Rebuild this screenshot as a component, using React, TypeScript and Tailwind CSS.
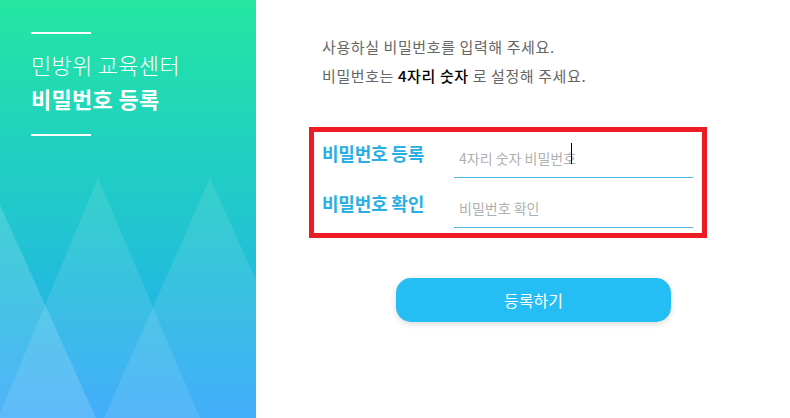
import React from 'react';

const font = { fontFamily: '"Noto Sans CJK KR", "Noto Sans", sans-serif' };

function Mountains() {
  return (
    <svg
      className="absolute inset-0 h-full w-full"
      viewBox="0 0 256 418"
      preserveAspectRatio="none"
    >
      <polygon points="-12,178 -112,418 96,418" fill="#ffffff" fillOpacity="0.16" />
      <polygon points="98,178 -2,418 200,418" fill="#ffffff" fillOpacity="0.1" />
      <polygon points="210,178 104,418 318,418" fill="#ffffff" fillOpacity="0.1" />
    </svg>
  );
}

function Field({ label, placeholder, cursor }: { label: string; placeholder: string; cursor?: boolean }) {
  return (
    <div className="flex items-center">
      <label className="mb-[10px] w-[132px] text-[18px] font-bold tracking-[-0.2px] text-[#2aaee6]">{label}</label>
      <div className="relative w-[239px]">
        <input
          type="password"
          placeholder={placeholder}
          className="h-[40px] w-full border-b border-[#4db6e2] bg-transparent pl-[5px] text-[14px] text-[#333] placeholder:text-[#b0b0b0] outline-none"
        />
        {cursor && <span className="absolute left-[117px] top-[5px] h-[21px] w-px bg-black" />}
      </div>
    </div>
  );
}

export default function App() {
  return (
    <div className="flex h-[418px] w-[790px] overflow-hidden bg-white" style={font}>
      <aside className="relative w-[256px] shrink-0 bg-gradient-to-b from-[#25e6a0] via-[#21c8cb] to-[#2ea4fa]">
        <Mountains />
        <div className="relative pl-[31px] pt-[32px]">
          <div className="h-[2px] w-[60px] bg-white" />
          <h1 className="mt-[13px] text-[22px] font-light leading-[34px] tracking-[0.3px] text-white">민방위 교육센터</h1>
          <h2 className="text-[22px] font-bold leading-[34px] tracking-[0.3px] text-white">비밀번호 등록</h2>
          <div className="mt-[19px] h-[2px] w-[60px] bg-white" />
        </div>
      </aside>

      <main className="flex-1 pl-[53px] pt-[32px]">
        <div className="pl-[13px] text-[15px] leading-[29px] tracking-[0.6px] text-[#666]">
          <p>사용하실 비밀번호를 입력해 주세요.</p>
          <p>
            비밀번호는 <b className="font-medium text-black">4자리 숫자</b> 로 설정해 주세요.
          </p>
        </div>

        <div className="mt-[37px] flex h-[111px] w-[398px] flex-col gap-[10px] border-[5px] border-[#ed1c24] pl-[8px] pt-[6px]">
          <Field label="비밀번호 등록" placeholder="4자리 숫자 비밀번호" cursor />
          <Field label="비밀번호 확인" placeholder="비밀번호 확인" />
        </div>

        <button className="ml-[87px] mt-[40px] h-[44px] w-[275px] rounded-[15px] bg-[#25bef4] text-[16px] text-white shadow-[0_2px_6px_rgba(0,0,0,0.15)]">
          등록하기
        </button>
      </main>
    </div>
  );
}
